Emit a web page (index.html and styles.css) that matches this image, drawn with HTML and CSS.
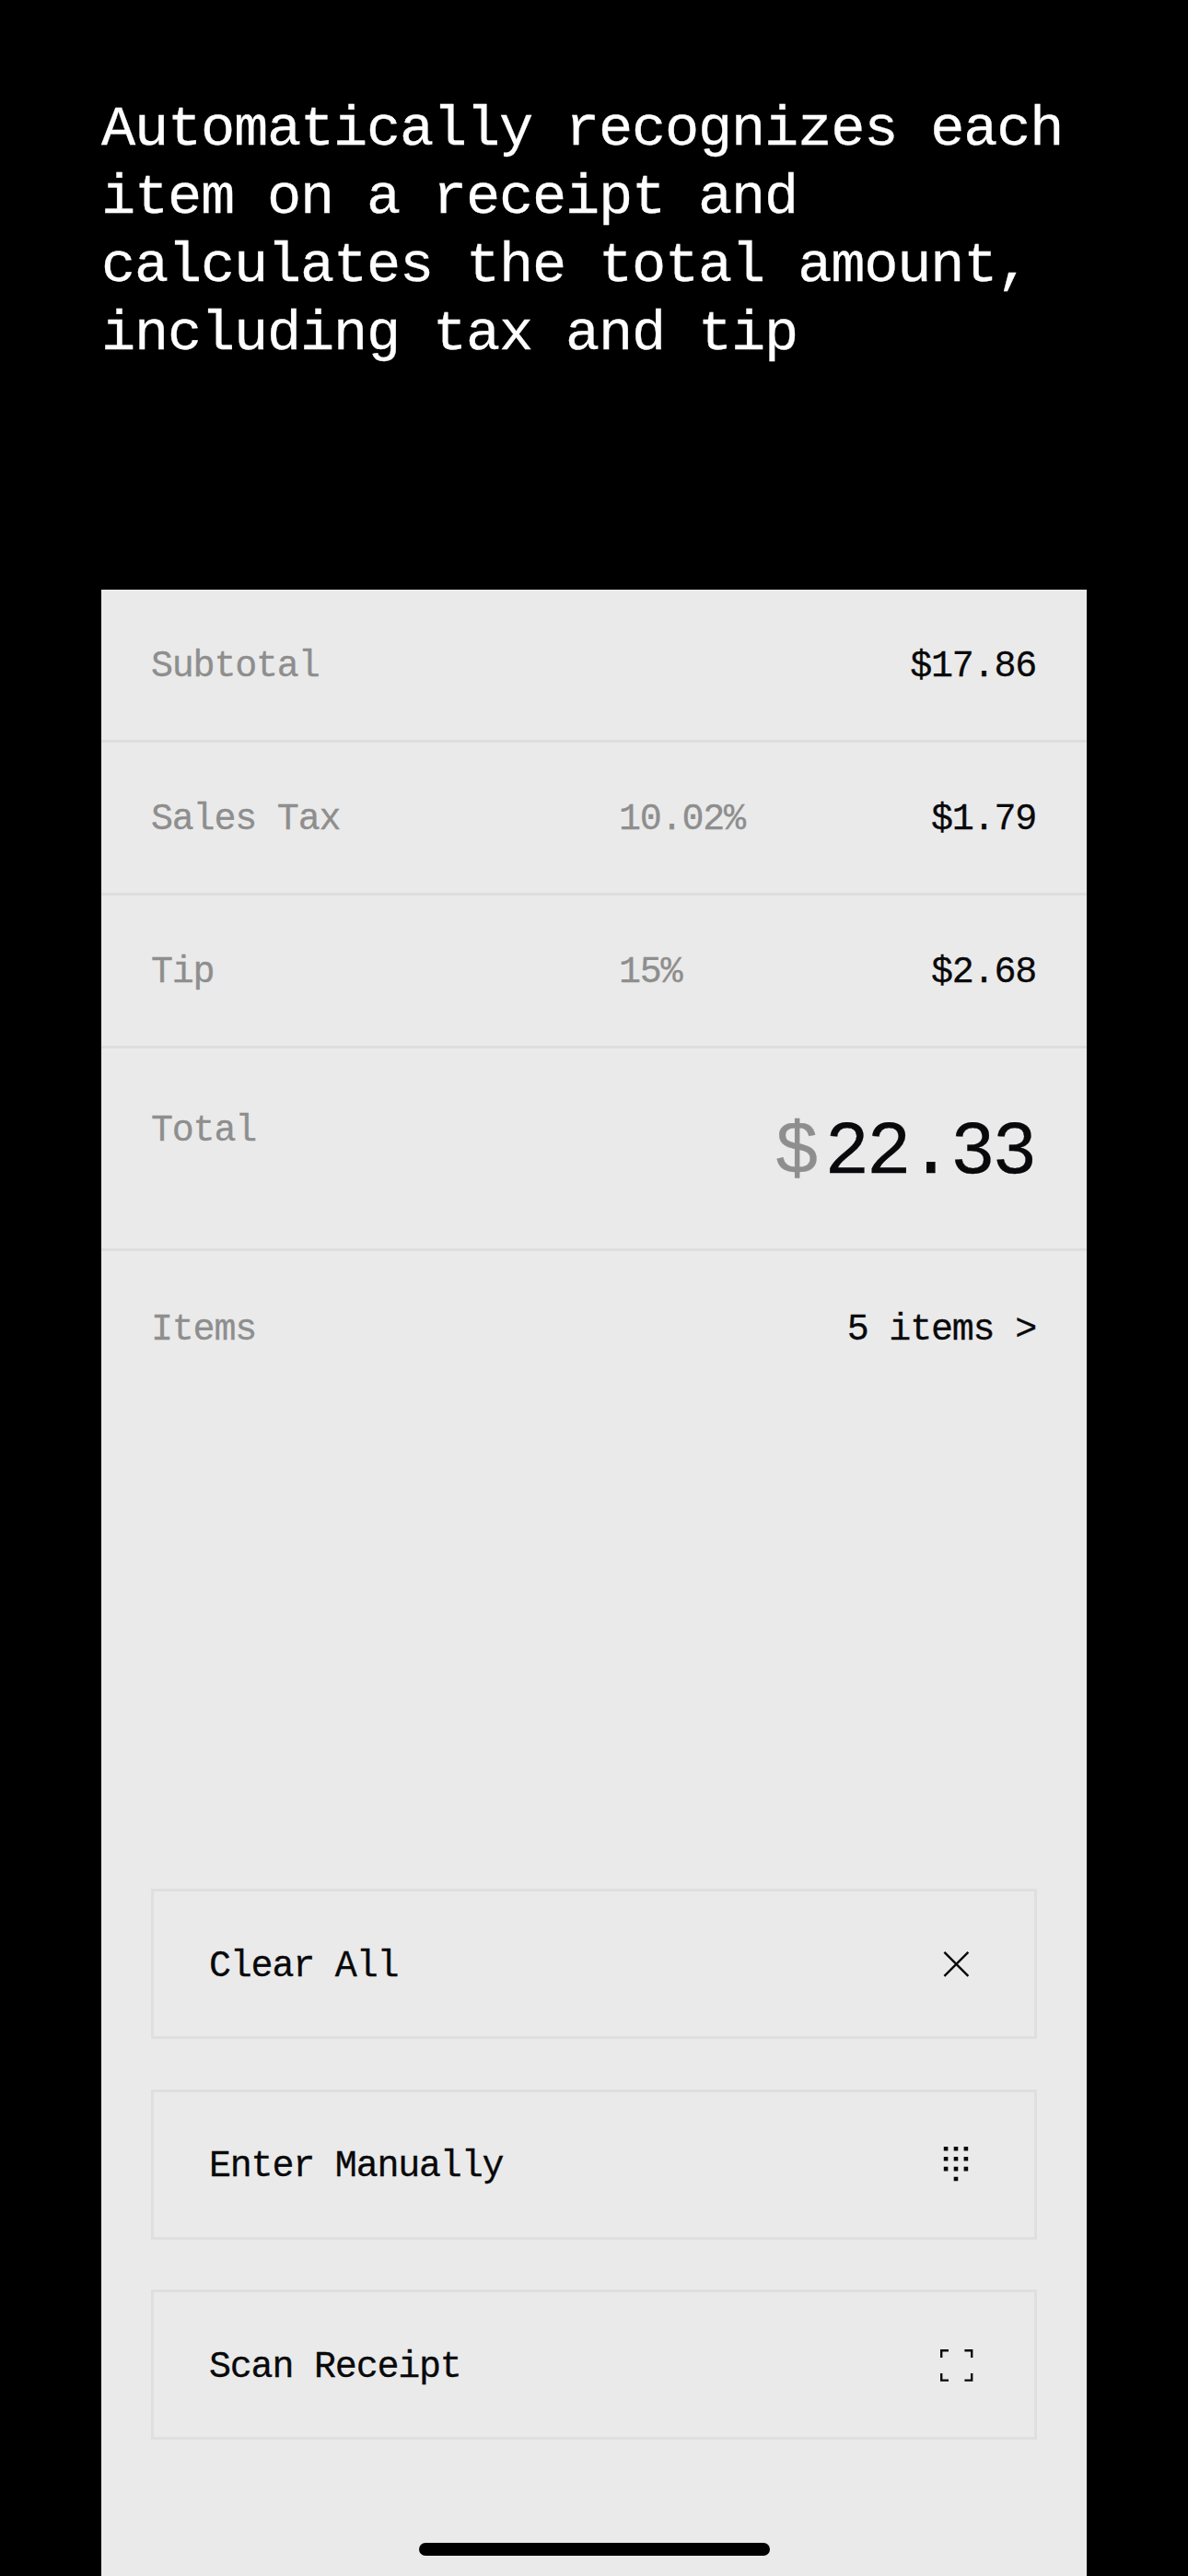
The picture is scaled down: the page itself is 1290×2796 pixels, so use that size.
FILE: index.html
```html
<!DOCTYPE html>
<html lang="en">

<head>
    <meta charset="UTF-8">
    <meta name="viewport" content="width=device-width, initial-scale=1.0">
    <title>Receipt</title>
    <link rel="stylesheet" href="styles.css">
</head>

<body>
    <h1 class="headline">Automatically recognizes each<br>item on a receipt and<br>calculates the total amount,<br>including tax and tip</h1>

    <main class="card">
        <div class="row">
            <span class="label">Subtotal</span>
            <span class="value">$17.86</span>
        </div>
        <div class="row">
            <span class="label">Sales Tax</span>
            <span class="percent">10.02%</span>
            <span class="value">$1.79</span>
        </div>
        <div class="row">
            <span class="label">Tip</span>
            <span class="percent">15%</span>
            <span class="value">$2.68</span>
        </div>
        <div class="row total">
            <span class="label">Total</span>
            <span class="amount"><span class="currency">$</span>22.33</span>
        </div>
        <div class="row items">
            <span class="label">Items</span>
            <span class="value">5 items &gt;</span>
        </div>

        <div class="actions">
            <button type="button">
                <span>Clear All</span>
                <svg width="40" height="40" viewBox="0 0 40 40" fill="none" stroke="#09090b" stroke-width="2.4">
                    <path d="M6.4 6.8l26 26M32.4 6.8l-26 26" />
                </svg>
            </button>
            <button type="button">
                <span>Enter Manually</span>
                <svg width="40" height="40" viewBox="0 0 40 40" fill="#09090b">
                    <path d="M5.8 1h4.6v4.6h-4.6zM16.7 1h4.6v4.6h-4.6zM27.6 1h4.6v4.6h-4.6zM5.8 12h4.6v4.6h-4.6zM16.7 12h4.6v4.6h-4.6zM27.6 12h4.6v4.6h-4.6zM5.8 22.8h4.6v4.6h-4.6zM16.7 22.8h4.6v4.6h-4.6zM27.6 22.8h4.6v4.6h-4.6zM16.7 33.7h4.6v4.6h-4.6z" />
                </svg>
            </button>
            <button type="button">
                <span>Scan Receipt</span>
                <svg width="40" height="40" viewBox="0 0 40 40" fill="none" stroke="#09090b" stroke-width="2.4">
                    <path d="M3.2 12V4.2H11M28.4 4.2h7.8V12M36.2 29v7.6h-7.8M11 36.6H3.2V29" />
                </svg>
            </button>
        </div>

        <div class="home-bar"></div>
    </main>
</body>

</html>
```

FILE: styles.css
```css
* {
    box-sizing: border-box;
}

body {
    display: flex;
    flex-direction: column;
    height: 2796px;
    margin: 0;
    padding: 104px 110px 0;
    background-color: #000;
    font-family: "Liberation Mono", monospace;
    font-size: 40px;
    line-height: 46px;
    letter-spacing: -1.2px;
    color: #09090b;
    -webkit-text-stroke: 0.3px;
}

.headline {
    margin: 0 -20px 240px 0;
    font-size: 62px;
    font-weight: normal;
    line-height: 74px;
    letter-spacing: -1.2px;
    white-space: nowrap;
    color: #fff;
}

.card {
    display: flex;
    flex: 1;
    flex-direction: column;
    background-color: #eaeaea;
}

.row {
    display: grid;
    grid-template-columns: 508px 1fr auto;
    align-items: center;
    height: 166px;
    padding: 5px 55px 0 54px;
    border-bottom: 3px solid #dedede;
}

.label,
.percent {
    color: #8e8e8e;
}

.value,
.amount {
    grid-column: 3;
}

.total {
    align-items: start;
    height: 220px;
    padding-top: 67px;
}

.amount {
    display: flex;
    margin: -1px 2px 0 0;
    font-size: 81px;
    line-height: 96px;
    letter-spacing: -3.1px;
}

.currency {
    margin-right: 9px;
    color: #8e8e8e;
}

.items {
    border-bottom: none;
}

.actions {
    display: flex;
    flex-direction: column;
    gap: 54.5px;
    margin-top: auto;
    padding: 0 54px 0 54px;
}

button {
    display: flex;
    justify-content: space-between;
    align-items: center;
    height: 163px;
    padding: 0 64px 0 60px;
    border: 3px solid #dfdfdf;
    background: none;
    font: inherit;
    letter-spacing: inherit;
    color: inherit;
    cursor: pointer;
}

button span {
    padding-top: 6px;
}

.home-bar {
    width: 381px;
    height: 14px;
    margin: 112px 0 22px 345px;
    border-radius: 7px;
    background-color: #000;
}
```
